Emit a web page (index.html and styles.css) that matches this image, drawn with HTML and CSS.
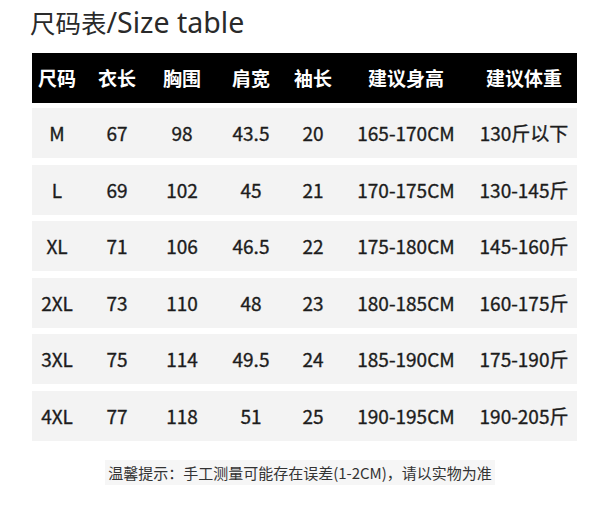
FILE: index.html
```html
<!DOCTYPE html>
<html lang="zh-CN">
<head>
<meta charset="utf-8">
<title>尺码表</title>
<link rel="stylesheet" href="styles.css">
</head>
<body>
<div class="page">
  <h1 class="title">尺码表<span class="latin">/Size table</span></h1>
  <div class="table">
    <div class="row head">
      <span>尺码</span><span>衣长</span><span>胸围</span><span>肩宽</span><span>袖长</span><span>建议身高</span><span>建议体重</span>
    </div>
    <div class="row">
      <span>M</span><span>67</span><span>98</span><span>43.5</span><span>20</span><span>165-170CM</span><span>130斤以下</span>
    </div>
    <div class="row">
      <span>L</span><span>69</span><span>102</span><span>45</span><span>21</span><span>170-175CM</span><span>130-145斤</span>
    </div>
    <div class="row">
      <span>XL</span><span>71</span><span>106</span><span>46.5</span><span>22</span><span>175-180CM</span><span>145-160斤</span>
    </div>
    <div class="row">
      <span>2XL</span><span>73</span><span>110</span><span>48</span><span>23</span><span>180-185CM</span><span>160-175斤</span>
    </div>
    <div class="row">
      <span>3XL</span><span>75</span><span>114</span><span>49.5</span><span>24</span><span>185-190CM</span><span>175-190斤</span>
    </div>
    <div class="row">
      <span>4XL</span><span>77</span><span>118</span><span>51</span><span>25</span><span>190-195CM</span><span>190-205斤</span>
    </div>
  </div>
  <p class="note"><span>温馨提示：手工测量可能存在误差(1-2CM)，请以实物为准</span></p>
</div>
</body>
</html>
```
FILE: styles.css
```css
html, body {
  margin: 0;
  padding: 0;
  background: #ffffff;
}
body {
  font-family: "Noto Sans CJK SC", "Noto Sans", sans-serif;
  color: #222222;
}
.page {
  width: 600px;
  height: 506px;
  box-sizing: border-box;
}
.title {
  margin: 0;
  padding: 4px 0 0 30px;
  height: 53px;
  box-sizing: border-box;
  font-size: 25.5px;
  font-weight: 400;
  line-height: 36px;
  color: #2a2a2a;
  white-space: nowrap;
}
.title .latin {
  font-family: "Noto Sans", "Noto Sans CJK SC", sans-serif;
  font-size: 28.5px;
  font-weight: 400;
}
.table {
  margin-left: 32px;
  width: 545px;
  display: flex;
  flex-direction: column;
  gap: 6.6px;
}
.row {
  display: grid;
  grid-template-columns: 50px 70px 60px 78px 46px 140px 96px;
  padding-right: 5px;
  height: 50px;
  align-items: center;
  background: #f3f3f3;
  font-size: 19px;
  font-weight: 400;
  color: #1c1c1c;
  -webkit-text-stroke: 0.35px #1c1c1c;
}
.row span {
  text-align: center;
  white-space: nowrap;
  line-height: 50px;
}
.row.head {
  background: #000000;
  color: #ffffff;
  font-weight: 700;
  -webkit-text-stroke: 0;
  margin-bottom: -1.6px;
}
.note {
  margin: 21px 0 0;
  text-align: center;
  font-size: 15px;
  line-height: 22px;
  color: #333333;
}
.note span {
  background: #f6f6f6;
  padding: 2px 3px;
}
```
